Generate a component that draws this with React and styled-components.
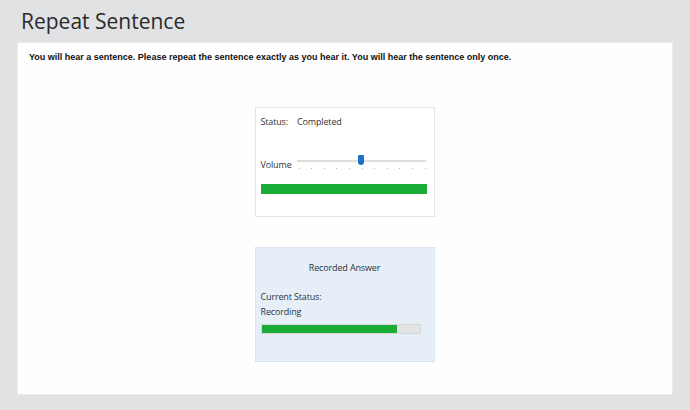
import React from "react";
import styled, { createGlobalStyle } from "styled-components";

const GlobalStyle = createGlobalStyle`
  html, body {
    margin: 0;
    padding: 0;
    background: #e1e2e4;
    height: 100%;
  }
  #root {
    width: 690px;
    height: 410px;
  }
`;

const Page = styled.div`
  width: 690px;
  height: 410px;
  box-sizing: border-box;
  padding: 7px 17px 15px 17px;
  display: flex;
  flex-direction: column;
`;

const Title = styled.h1`
  margin: 0 0 0 4px;
  font-family: "Open Sans", sans-serif;
  font-weight: 400;
  font-size: 21px;
  line-height: 28px;
  color: #2a2a2a;
  height: 35px;
`;

const Panel = styled.main`
  flex: 1;
  background: #fefefe;
  border: 1px solid #ececec;
  box-sizing: border-box;
  display: flex;
  flex-direction: column;
  align-items: center;
  padding: 9px 12px 0 11px;
`;

const Instruction = styled.p`
  align-self: stretch;
  margin: 0;
  font-family: "Liberation Sans", Arial, sans-serif;
  font-weight: 700;
  font-size: 9px;
  line-height: 11px;
  color: #111;
`;

const Card = styled.section`
  width: 180px;
  box-sizing: border-box;
  border: 1px solid ${(p) => (p.$tinted ? "#dbe3ee" : "#e4e4e4")};
  background: ${(p) => (p.$tinted ? "#e6eef8" : "#ffffff")};
  padding: ${(p) => p.$pad};
  margin-top: ${(p) => p.$top}px;
  height: ${(p) => p.$height}px;
  font-family: "Open Sans", "Noto Sans", sans-serif;
  font-size: 9px;
  letter-spacing: -0.15px;
  color: #333;
  display: flex;
  flex-direction: column;
`;

const StatusRow = styled.div`
  display: flex;
  gap: 9px;
  line-height: 12px;
`;

const VolumeRow = styled.div`
  display: flex;
  align-items: center;
  gap: 5px;
  margin-top: 27px;
  line-height: 12px;
`;

const Slider = styled.div`
  position: relative;
  flex: 1;
  height: 20px;
  margin-right: 3px;
`;

const Track = styled.div`
  position: absolute;
  left: 0;
  right: 0;
  top: 5px;
  height: 2px;
  background: #dedede;
`;

const Ticks = styled.div`
  position: absolute;
  left: 2px;
  right: 0;
  top: 13px;
  display: flex;
  justify-content: space-between;
`;

const Tick = styled.span`
  width: 1px;
  height: 1px;
  background: #b5b5b5;
`;

const Thumb = styled.div`
  position: absolute;
  left: 61px;
  top: 0;
  width: 6px;
  height: 10px;
  background: #1a73c8;
  border-radius: 1px 1px 3px 3px;
`;

const Bar = styled.div`
  height: ${(p) => p.$h}px;
  width: ${(p) => p.$w}px;
  background: ${(p) => p.$bg};
  border: ${(p) => p.$border};
  box-sizing: border-box;
  margin-top: ${(p) => p.$top}px;
  display: flex;
`;

const Fill = styled.div`
  background: #19ad38;
  height: 100%;
`;

const CardHeading = styled.div`
  text-align: center;
  line-height: 12px;
`;

const Label = styled.div`
  line-height: 15px;
`;

export default function App() {
  const ticks = Array.from({ length: 11 });
  return (
    <>
      <GlobalStyle />
      <Page>
        <Title>Repeat Sentence</Title>
        <Panel>
          <Instruction>
            You will hear a sentence. Please repeat the sentence exactly as you
            hear it. You will hear the sentence only once.
          </Instruction>
          <Card $top={44} $height={110} $pad="8px 5px">
            <StatusRow>
              <span>Status:</span>
              <span>Completed</span>
            </StatusRow>
            <VolumeRow>
              <span>Volume</span>
              <Slider>
                <Track />
                <Ticks>
                  {ticks.map((_, i) => (
                    <Tick key={i} />
                  ))}
                </Ticks>
                <Thumb />
              </Slider>
            </VolumeRow>
            <Bar $h={10} $w={166} $bg="#19ad38" $top={9} $border="none" />
          </Card>
          <Card $tinted $top={30} $height={115} $pad="14px 5px">
            <CardHeading>Recorded Answer</CardHeading>
            <Label style={{ marginTop: 15 }}>Current Status:</Label>
            <Label>Recording</Label>
            <Bar $h={10} $w={160} $bg="#e4e4e4" $top={5} $border="1px solid #d8d8d8">
              <Fill style={{ width: "86%" }} />
            </Bar>
          </Card>
        </Panel>
      </Page>
    </>
  );
}
